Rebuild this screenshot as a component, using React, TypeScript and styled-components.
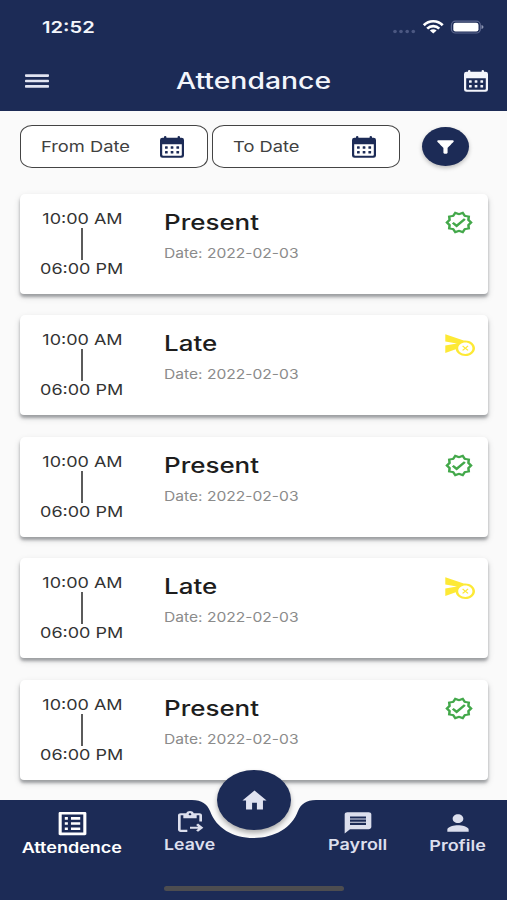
import React from "react";
import styled, { createGlobalStyle } from "styled-components";
import {
  MdFilterAlt,
  MdOutlineVerified,
  MdCancelScheduleSend,
  MdHome,
  MdListAlt,
  MdContentPasteGo,
  MdMessage,
  MdPerson,
} from "react-icons/md";

const NAVY = "#1c2b56";

const GlobalStyle = createGlobalStyle`
  * { box-sizing: border-box; }
  body { margin: 0; background: #fafafa; font-family: Inter, "Liberation Sans", sans-serif; }
`;

const Screen = styled.div`
  width: 507px;
  height: 900px;
  display: flex;
  flex-direction: column;
  overflow: hidden;
  background: #fafafa;
`;

const Label = styled.span<{
  $size: number;
  $stretch: number;
  $weight?: number;
  $color?: string;
  $line?: number;
  $center?: boolean;
}>`
  display: block;
  width: max-content;
  white-space: nowrap;
  font-size: ${(p) => p.$size}px;
  font-weight: ${(p) => p.$weight ?? 400};
  line-height: ${(p) => p.$line ?? 20}px;
  color: ${(p) => p.$color ?? "#333"};
  transform: scaleX(${(p) => p.$stretch});
  transform-origin: ${(p) => (p.$center ? "center" : "left")};
`;

const Icon = styled.span<{ $w: number; $h: number; $color: string }>`
  display: block;
  flex: none;
  width: ${(p) => p.$w}px;
  height: ${(p) => p.$h}px;
  color: ${(p) => p.$color};
  svg {
    display: block;
    width: 100%;
    height: 100%;
  }
`;

const Header = styled.header`
  flex: none;
  height: 110.5px;
  background: ${NAVY};
`;

const StatusBar = styled.div`
  height: 52px;
  padding: 2px 23px 0 42px;
  display: flex;
  align-items: center;
  justify-content: space-between;
`;

const StatusIcons = styled.div`
  display: flex;
  align-items: center;
`;

const AppBar = styled.div`
  height: 58px;
  display: grid;
  grid-template-columns: 60px 1fr 60px;
  align-items: center;
  justify-items: center;
  padding: 0 1px 0 7px;
`;

const Title = styled.h1`
  margin: 0 5px 0 0;
`;

const Filters = styled.div`
  flex: none;
  height: 83px;
  padding: 14.5px 38px 0 20px;
  display: flex;
  align-items: flex-start;
`;

const DateField = styled.div`
  width: 188px;
  height: 43px;
  margin-right: 4px;
  padding: 0 23px 0 20px;
  border: 1.5px solid #444;
  border-radius: 12px / 10px;
  background: #fff;
  display: flex;
  align-items: center;
  justify-content: space-between;
`;

const FilterButton = styled.button`
  width: 47px;
  height: 39px;
  margin: 2px 0 0 auto;
  padding: 0;
  border: 0;
  border-radius: 50%;
  background: ${NAVY};
  box-shadow: 0 2px 4px rgba(0, 0, 0, 0.25);
  display: flex;
  align-items: center;
  justify-content: center;
`;

const List = styled.main`
  flex: 1;
  min-height: 0;
  padding: 0 19px 0 20px;
  display: flex;
  flex-direction: column;
  gap: 21.5px;
`;

const Card = styled.article`
  flex: none;
  height: 100px;
  padding: 14px 12px 0 22px;
  border-radius: 5px 5px 4px 4px;
  background: #fff;
  box-shadow: 0 3px 3px rgba(60, 66, 72, 0.4), 0 3px 7px rgba(0, 0, 0, 0.14);
  display: grid;
  grid-template-columns: 121.5px 1fr 32px;
`;

const Times = styled.div`
  width: 80px;
  padding-top: 1px;
  display: flex;
  flex-direction: column;
  align-items: center;
`;

const Connector = styled.div`
  width: 2px;
  height: 32px;
  margin: -1px 0;
  background: #5b5b5b;
`;

const StatusBadge = styled.div`
  padding-top: 2px;
`;

const Nav = styled.nav`
  position: relative;
  flex: none;
  height: 100px;
  background: #fafafa;
`;

const NavShape = styled.svg`
  position: absolute;
  inset: 0;
`;

const NavItems = styled.div`
  position: relative;
  display: grid;
  grid-template-columns: 144px 92px 68px 107px 93px;
`;

const NavItem = styled.div<{ $top: number }>`
  height: 60px;
  padding-top: ${(p) => p.$top}px;
  display: flex;
  flex-direction: column;
  align-items: center;
`;

const HomeButton = styled.button`
  position: absolute;
  left: 217px;
  top: -30px;
  width: 74px;
  height: 60px;
  padding: 0;
  border: 0;
  border-radius: 50%;
  background: ${NAVY};
  box-shadow: 0 3px 5px rgba(0, 0, 0, 0.32);
  display: flex;
  align-items: center;
  justify-content: center;
`;

const HomeIndicator = styled.div`
  position: relative;
  width: 180px;
  height: 5px;
  margin: 26px auto 0;
  border-radius: 3px;
  background: #4d4d50;
`;

const stretch = { preserveAspectRatio: "none" };

function CalendarIcon() {
  return (
    <svg viewBox="0 0 24 22" fill="currentColor">
      <path
        fillRule="evenodd"
        d="M4 1Q4 0 5.200 0T6.400 1V1.700H17.600V1Q17.600 0 18.800 0T20 1V1.700H21.500Q24 1.700 24 4V19.500Q24 21.800 21.500 21.800H2.500Q0 21.800 0 19.500V4Q0 1.700 2.500 1.700H4ZM2.200 8.300V18.800Q2.200 19.700 3.200 19.700H20.800Q21.800 19.700 21.800 18.800V8.300Z"
      />
      {[10.2, 14.9].map((y) =>
        [5, 10.7, 16.4].map((x) => <rect key={`${x}-${y}`} x={x} y={y} width="2.700" height="2.500" rx=".5" />)
      )}
    </svg>
  );
}

function MenuIcon() {
  return (
    <svg viewBox="0 0 24 14" fill="currentColor">
      <rect y=".3" width="24" height="2.600" rx=".8" />
      <rect y="5.700" width="24" height="2.600" rx=".8" />
      <rect y="11.100" width="24" height="2.600" rx=".8" />
    </svg>
  );
}

const records = ["Present", "Late", "Present", "Late", "Present"];

export default function App() {
  return (
    <Screen>
      <GlobalStyle />
      <Header>
        <StatusBar>
          <Label $size={16.5} $stretch={1.22} $weight={600} $color="#f3f5fb">12:52</Label>
          <StatusIcons>
            <svg width="90" height="18" viewBox="0 0 90 18">
              <g fill="#4c5882">
                <circle cx="4" cy="13.500" r="1.800" />
                <circle cx="10" cy="13.500" r="1.800" />
                <circle cx="16.200" cy="13.500" r="1.800" />
                <circle cx="22.300" cy="13.500" r="1.800" />
              </g>
              <g fill="none" stroke="#fff" strokeWidth="2.700">
                <path d="M32.800 7.300C38 1.900 46.500 1.900 51.700 7.300" />
                <path d="M36.200 10.600C39.600 7.300 44.900 7.300 48.300 10.600" />
              </g>
              <path d="M38.900 12.600C40.900 10.900 43.600 10.900 45.600 12.600L42.250 15.600Z" fill="#fff" />
              <rect x="60.400" y="3.200" width="29" height="11.800" rx="4" fill="none" stroke="#5d688f" strokeWidth="1.200" />
              <rect x="62.300" y="4.800" width="25.200" height="8.700" rx="2.200" fill="#fff" />
            </svg>
            <svg width="3" height="6" viewBox="0 0 3 6">
              <path d="M.5 1Q2.500 1.500 2.500 3T.500 5Z" fill="#8d96b3" />
            </svg>
          </StatusIcons>
        </StatusBar>
        <AppBar>
          <Icon $w={24} $h={14} $color="#e1e4f1"><MenuIcon /></Icon>
          <Title>
            <Label $size={22.5} $stretch={1.26} $weight={450} $color="#f3f5fb" $line={28} $center>Attendance</Label>
          </Title>
          <Icon $w={24} $h={22} $color="#f3f5fb"><CalendarIcon /></Icon>
        </AppBar>
      </Header>
      <Filters>
        {["From Date", "To Date"].map((name) => (
          <DateField key={name}>
            <Label $size={15} $stretch={1.22} $color="#414141">{name}</Label>
            <Icon $w={24} $h={22} $color={NAVY}><CalendarIcon /></Icon>
          </DateField>
        ))}
        <FilterButton aria-label="Filter">
          <Icon $w={25} $h={20} $color="#fff"><MdFilterAlt {...stretch} /></Icon>
        </FilterButton>
      </Filters>
      <List>
        {records.map((status, i) => (
          <Card key={i}>
            <Times>
              <Label $size={15} $stretch={1.2} $center>10:00 AM</Label>
              <Connector />
              <Label $size={15} $stretch={1.2} $center>06:00 PM</Label>
            </Times>
            <div>
              <Label $size={21} $stretch={1.235} $weight={500} $color="#1d1d1d" $line={29}>{status}</Label>
              <Label $size={13} $stretch={1.2} $color="#8b8b8b" $line={32}>Date: 2022-02-03</Label>
            </div>
            <StatusBadge>
              {status === "Late" ? (
                <Icon $w={31} $h={25} $color="#fde935"><MdCancelScheduleSend {...stretch} /></Icon>
              ) : (
                <Icon $w={30} $h={25} $color="#43a84a"><MdOutlineVerified {...stretch} /></Icon>
              )}
            </StatusBadge>
          </Card>
        ))}
      </List>
      <Nav>
        <NavShape width="507" height="100" viewBox="0 0 507 100">
          <path
            d="M0 0H192C202 0 207 4 210 11C216 28 233 38 253.500 38C274 38 292 28 298 11C301 4 306 0 316 0H507V100H0Z"
            fill={NAVY}
          />
        </NavShape>
        <NavItems>
          <NavItem $top={7.5}>
            <Icon $w={37} $h={31} $color="#fff"><MdListAlt {...stretch} /></Icon>
            <Label $size={15} $stretch={1.2} $weight={600} $color="#fff" $line={17} $center>Attendence</Label>
          </NavItem>
          <NavItem $top={10}>
            <Icon $w={32} $h={25} $color="#dcdfed"><MdContentPasteGo {...stretch} /></Icon>
            <Label $size={15} $stretch={1.18} $weight={600} $color="#dcdfed" $center>Leave</Label>
          </NavItem>
          <span />
          <NavItem $top={9.5}>
            <Icon $w={32} $h={25.5} $color="#dcdfed"><MdMessage {...stretch} /></Icon>
            <Label $size={15} $stretch={1.2} $weight={600} $color="#dcdfed" $center>Payroll</Label>
          </NavItem>
          <NavItem $top={9.5}>
            <Icon $w={32} $h={26} $color="#dcdfed"><MdPerson {...stretch} /></Icon>
            <Label $size={15} $stretch={1.2} $weight={600} $color="#dcdfed" $center>Profile</Label>
          </NavItem>
        </NavItems>
        <HomeIndicator />
        <HomeButton aria-label="Home">
          <Icon $w={29} $h={27} $color="#e0e3f1"><MdHome {...stretch} /></Icon>
        </HomeButton>
      </Nav>
    </Screen>
  );
}
